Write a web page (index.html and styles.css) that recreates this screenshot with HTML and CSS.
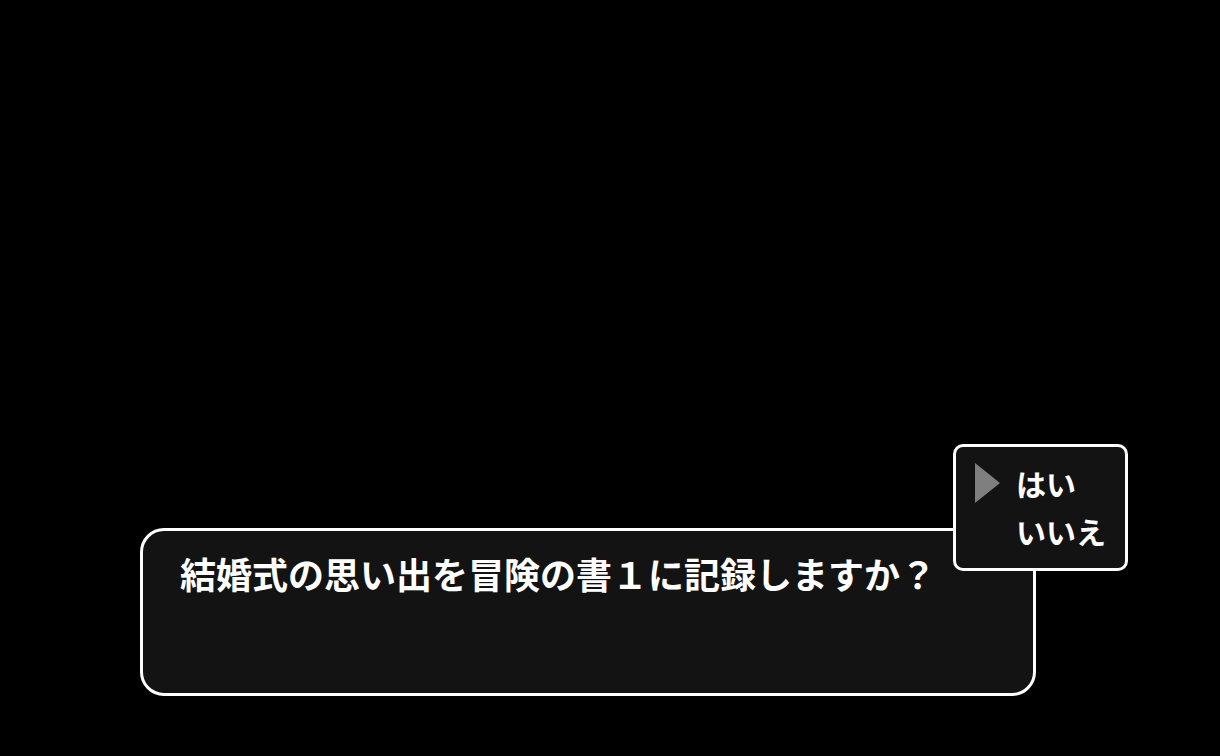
FILE: index.html
```html
<!DOCTYPE html>
<html lang="ja">
<head>
  <meta charset="UTF-8" />
  <meta name="viewport" content="width=device-width, initial-scale=1.0" />
  <title>冒険の書</title>
  <link rel="stylesheet" href="styles.css">
</head>
<body>
  <div class="screen">
    <div class="dialog">
      <p class="message">結婚式の思い出を冒険の書１に記録しますか？</p>

      <ul class="choices">
        <li class="choice selected"><span class="cursor"></span>はい</li>
        <li class="choice"><span class="cursor"></span>いいえ</li>
      </ul>
    </div>
  </div>
</body>
</html>
```

FILE: styles.css
```css
body {
  margin: 0;
  background: #000;
  color: #fff;
  font-family: "Noto Sans CJK JP", "Noto Sans", sans-serif;
  font-weight: 700;
}
.screen {
  box-sizing: border-box;
  height: 100vh;
  display: flex;
  flex-direction: column;
  justify-content: flex-end;
  padding: 0 184px 60px 140px;
}
.dialog {
  position: relative;
  box-sizing: border-box;
  height: 168px;
  border: 3px solid #fff;
  border-radius: 24px;
  background: #131313;
  padding: 24px 37px;
}
.message {
  margin: 0;
  font-size: 36px;
  line-height: 1;
}

/* yes / no box, hangs over the top right corner of the message */
.choices {
  position: absolute;
  left: 810px;
  top: -87px;
  box-sizing: border-box;
  width: 175px;
  height: 127px;
  margin: 0;
  padding: 21px 0 0 19px;
  list-style: none;
  border: 3px solid #fff;
  border-radius: 10px;
  background: #131313;
  display: flex;
  flex-direction: column;
  gap: 18px;
}
.choice {
  display: flex;
  align-items: center;
  gap: 16px;
  font-size: 30px;
  line-height: 1;
}
.cursor {
  width: 0;
  height: 0;
  border-left: 25px solid #7f7f7f;
  border-top: 20px solid transparent;
  border-bottom: 20px solid transparent;
  margin: -5px 0;
  visibility: hidden;
}
.selected .cursor {
  visibility: visible;
}
```
